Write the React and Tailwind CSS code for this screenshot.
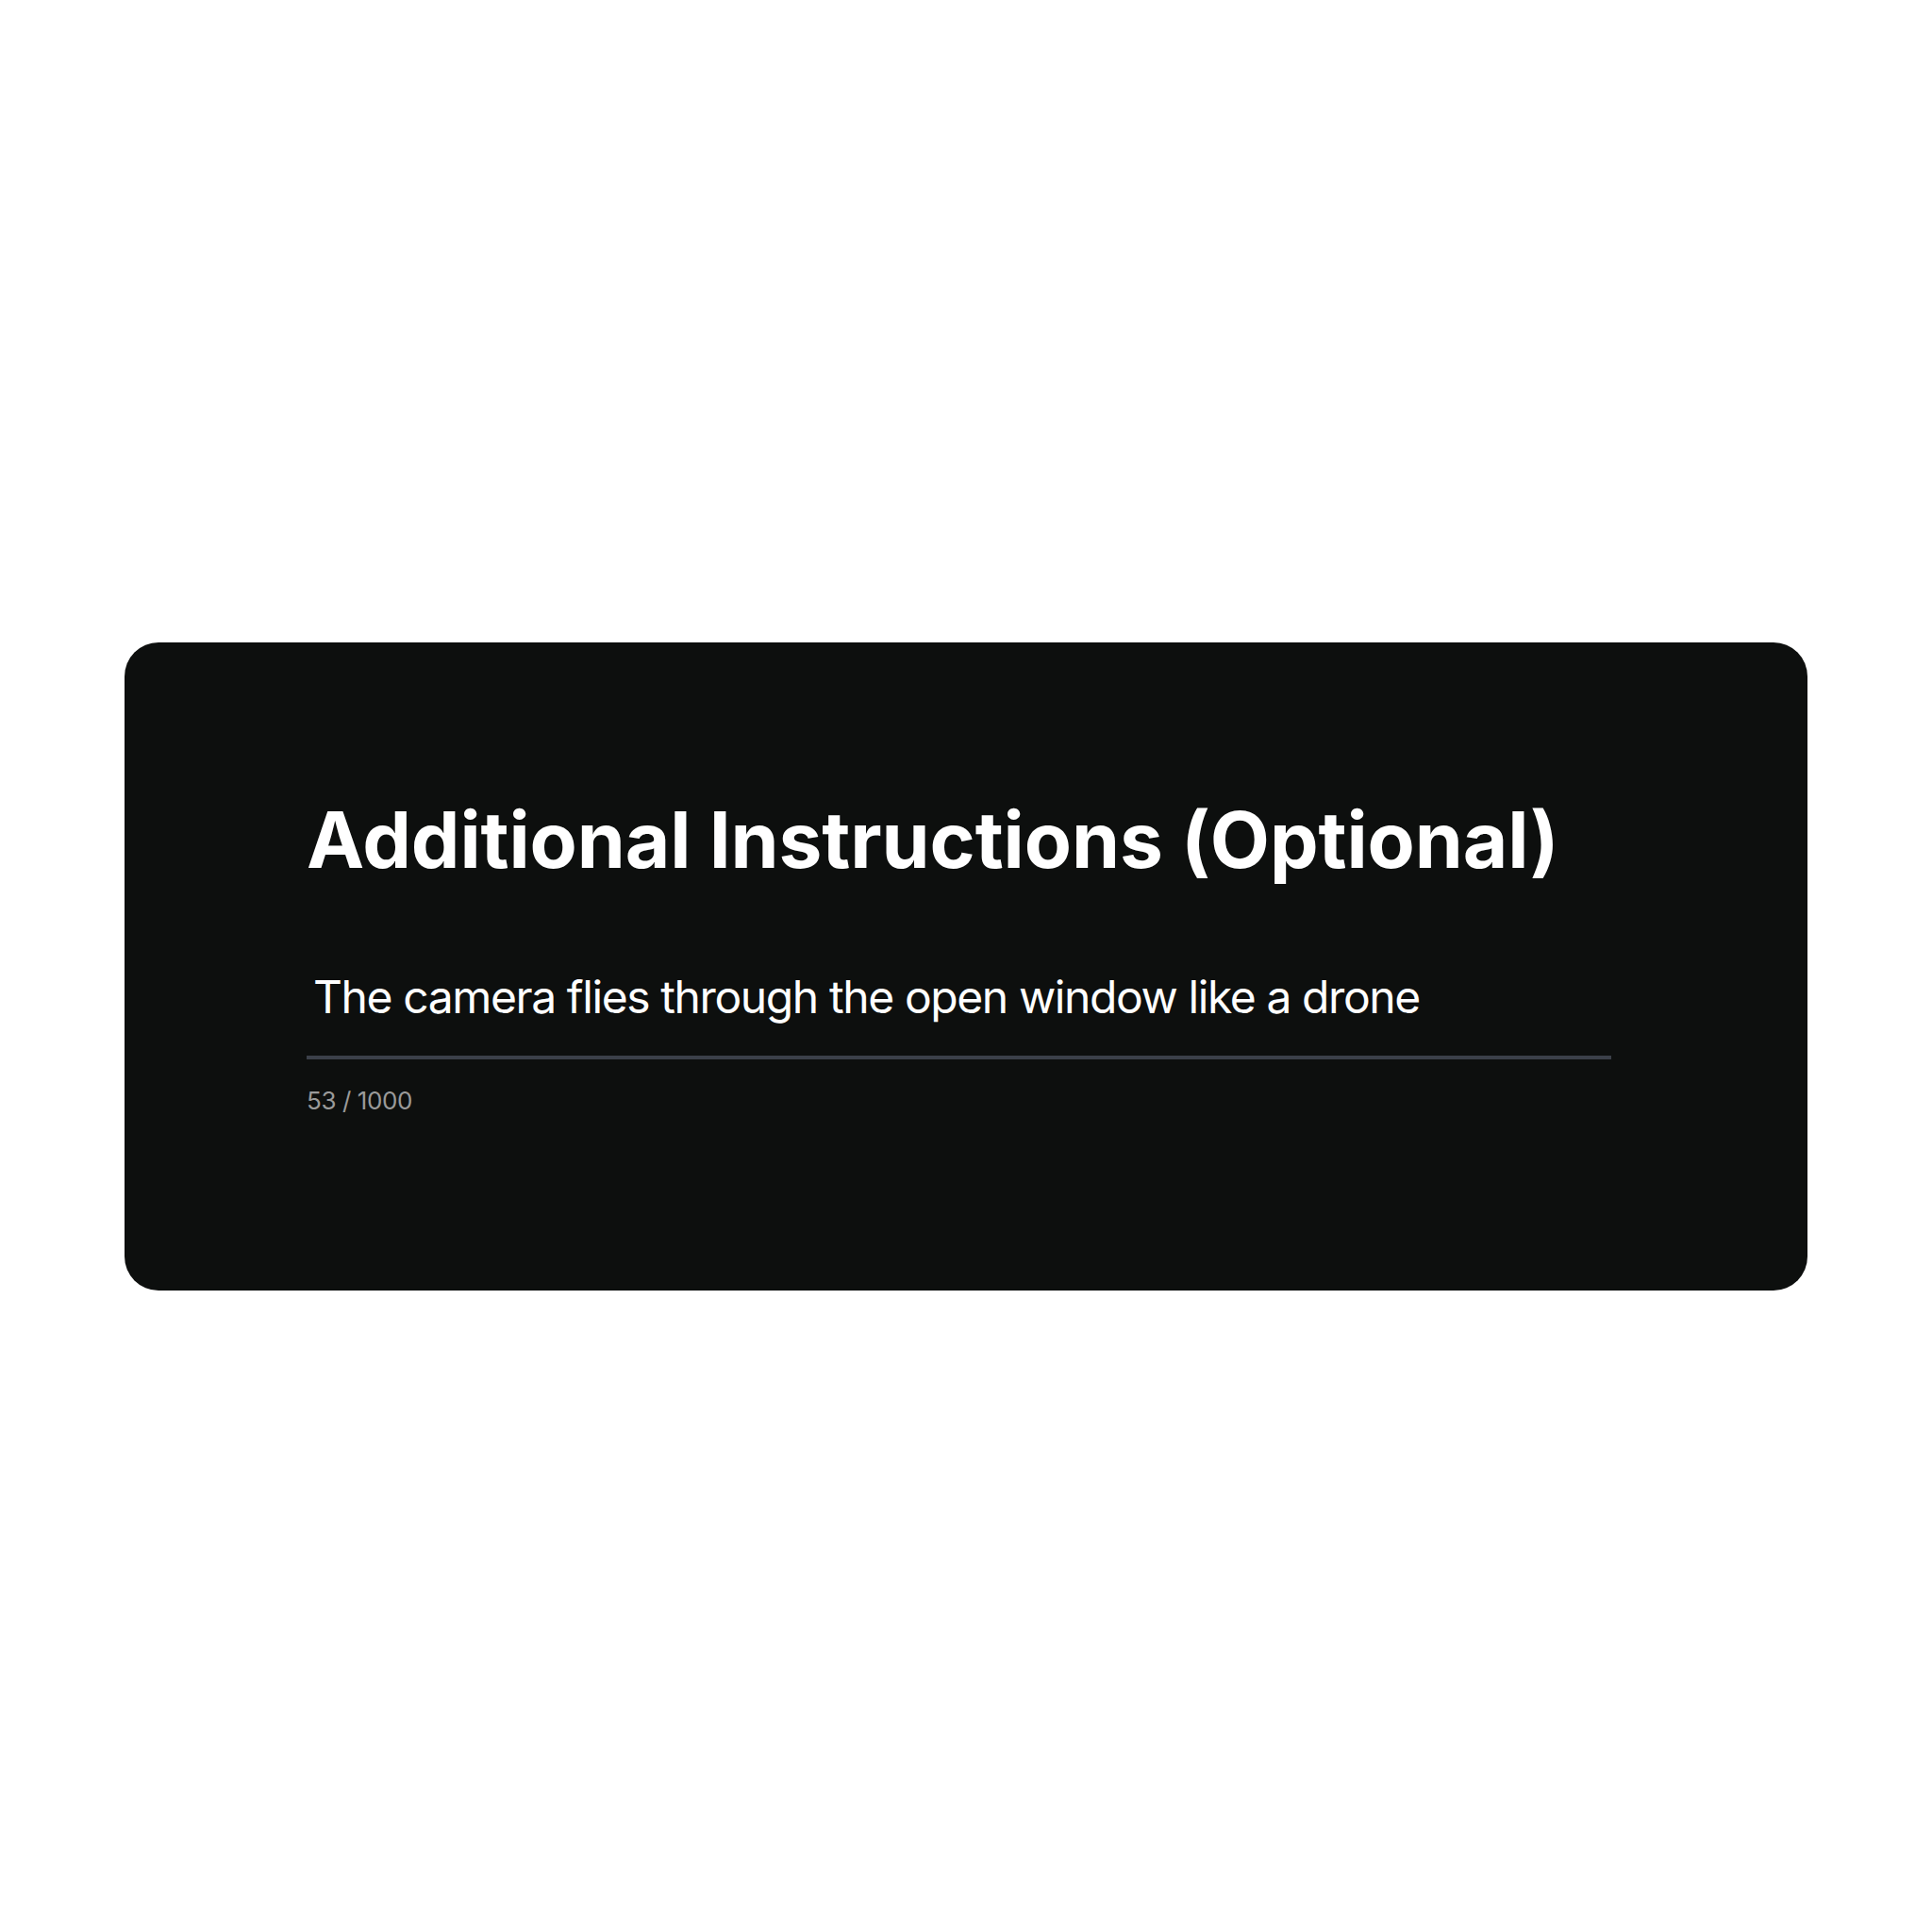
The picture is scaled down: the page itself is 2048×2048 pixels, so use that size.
export default function App() {
  return (
    <div className="w-[2048px] h-[2048px] bg-white flex items-center justify-center">
      <div className="w-[1784px] h-[687px] bg-[#0d0f0e] rounded-[36px] pl-[193px] pt-[169px] flex flex-col font-['Inter',sans-serif]">
        <h1 className="text-[82px] leading-[82px] font-bold text-white tracking-[-0.1px]">
          Additional Instructions (Optional)
        </h1>
        <div className="w-[1383px] mt-[101px] border-b-4 border-[#3b4049] h-[90px] px-[7px]">
          <div className="text-[48px] leading-[48px] text-white tracking-[-1.4px]">
            The camera flies through the open window like a drone
          </div>
        </div>
        <div className="mt-[31px] text-[26px] leading-[26px] text-[#9a9a9a] tracking-[-0.4px]">53 / 1000</div>
      </div>
    </div>
  );
}
